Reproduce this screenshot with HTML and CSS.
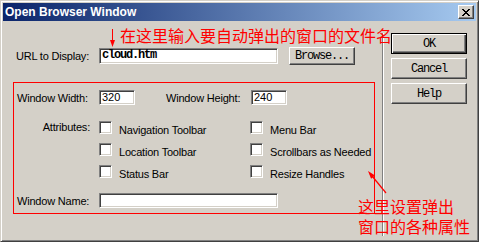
FILE: index.html
```html
<!DOCTYPE html>
<html><head><meta charset="utf-8"><link rel="stylesheet" href="styles.css"></head>
<body>
<div class="window">
  <div class="titlebar">
    <span class="title">Open Browser Window</span>
    <span class="close"><svg width="8" height="7" viewBox="0 0 8 7"><path d="M0 0h2v1H0zM6 0h2v1H6zM1 1h2v1H1zM5 1h2v1H5zM2 2h4v1H2zM3 3h2v1H3zM2 4h4v1H2zM1 5h2v1H1zM5 5h2v1H5zM0 6h2v1H0zM6 6h2v1H6z"/></svg></span>
  </div>
  <div class="body">
    <div class="main">
      <div class="url-row">
        <span class="lbl">URL to Display:</span>
        <span class="field url-field">cloud.htm</span>
        <span class="btn browse">Browse...</span>
      </div>
      <div class="box">
        <div class="size-row">
          <span class="lbl">Window Width:</span>
          <span class="field small">320</span>
          <span class="lbl2">Window Height:</span>
          <span class="field small">240</span>
        </div>
        <div class="attrs">
          <span class="lbl attr-lbl">Attributes:</span>
          <div class="checks">
            <div class="chk"><span class="cb"></span><span class="t">Navigation Toolbar</span></div>
            <div class="chk"><span class="cb"></span><span class="t">Menu Bar</span></div>
            <div class="chk"><span class="cb"></span><span class="t">Location Toolbar</span></div>
            <div class="chk"><span class="cb"></span><span class="t">Scrollbars as Needed</span></div>
            <div class="chk"><span class="cb"></span><span class="t">Status Bar</span></div>
            <div class="chk"><span class="cb"></span><span class="t">Resize Handles</span></div>
          </div>
        </div>
        <div class="name-row">
          <span class="lbl">Window Name:</span>
          <span class="field name-field"></span>
        </div>
      </div>
    </div>
    <div class="side">
      <span class="btn dflt">OK</span>
      <span class="btn">Cancel</span>
      <span class="btn">Help</span>
    </div>
  </div>
  <div class="note note-top">在这里输入要自动弹出的窗口的文件名</div>
  <svg class="arrow-top" width="10" height="22" viewBox="0 0 10 22"><rect x="4" y="1" width="1" height="12" fill="#f00"/><polygon points="2,12 7,12 4.5,19" fill="#f00"/></svg>
  <div class="note note-bottom"><div>这里设置弹出</div><div>窗口的各种属性</div></div>
  <svg class="arrow-bottom" width="26" height="28" viewBox="0 0 26 28"><line x1="22" y1="25" x2="6" y2="5.5" stroke="#f00" stroke-width="1.2"/><polygon points="4,3 7.1,10.8 11,7.6" fill="#f00"/></svg>
</div>
</body></html>
```
FILE: styles.css
```css
* { box-sizing: border-box; }
html, body { margin: 0; padding: 0; }
body {
  width: 479px; height: 242px; overflow: hidden;
  background: #D4D0C8;
  font-family: "Liberation Sans", Arial, sans-serif;
  font-size: 11px; color: #000; letter-spacing: -0.2px;
}
.window {
  position: relative;
  width: 479px; height: 242px;
  background: #D4D0C8;
  border: 1px solid; border-color: #D4D0C8 #404040 #404040 #D4D0C8;
  box-shadow: inset 1px 1px #fff, inset -1px -1px #808080;
  padding: 2px;
  display: flex; flex-direction: column;
}
.titlebar {
  flex: none; height: 18px;
  display: flex; align-items: center;
  padding: 0 2px;
  background: linear-gradient(to right, #0A246A, #A6CAF0);
}
.title {
  flex: 1; color: #fff; font-weight: bold; font-size: 12px; letter-spacing: 0;
  font-family: "Liberation Sans", Arial, sans-serif;
}
.close {
  width: 16px; height: 14px;
  display: flex; align-items: center; justify-content: center;
  background: #D4D0C8;
  border: 1px solid; border-color: #fff #404040 #404040 #fff;
  box-shadow: inset -1px -1px #808080;
}
.close svg { display: block; fill: #000; }
.body { flex: 1; display: flex; }
.main { width: 379px; flex: none; }
.url-row {
  margin-top: 26px; height: 18px; padding-left: 13px;
  display: flex; align-items: center;
}
.lbl { width: 83px; flex: none; white-space: nowrap; }
.field {
  display: block; flex: none; background: #fff;
  border: 1px solid; border-color: #808080 #fff #fff #808080;
  box-shadow: inset 1px 1px #404040, inset -1px -1px #D4D0C8;
  font-family: "Liberation Mono", "Courier New", monospace;
  font-size: 12px; letter-spacing: -1.2px; font-weight: bold;
  padding-left: 2px; line-height: 13px;
}
.url-field { width: 179px; height: 16px; }
.btn {
  display: flex; align-items: center; justify-content: center;
  background: #D4D0C8;
  border: 1px solid; border-color: #fff #404040 #404040 #fff;
  box-shadow: inset -1px -1px #808080;
  font-family: "Liberation Mono", "Courier New", monospace;
  font-size: 12px; letter-spacing: -1.2px;
}
.browse { width: 66px; height: 18px; margin-left: 11px; }
.box {
  margin-left: 10px; margin-top: 17px;
  width: 362px; height: 132px;
  border: 1px solid #f00;
  padding-left: 3px;
}
.size-row { margin-top: 7px; height: 15px; display: flex; align-items: center; }
.size-row .lbl { width: 82px; }
.small { width: 36px; height: 15px; font-weight: normal; font-family: "Liberation Sans", Arial, sans-serif; font-size: 11px; letter-spacing: 0; padding-left: 2px; }
.lbl2 { margin-left: 31px; width: 85px; white-space: nowrap; }
.attrs { margin-top: 16px; display: flex; }
.attr-lbl { width: 82px; text-align: right; padding-right: 9px; line-height: 13px; }
.checks { display: grid; grid-template-columns: 151px auto; row-gap: 9px; }
.chk { display: flex; height: 13px; white-space: nowrap; }
.cb {
  width: 13px; height: 13px; flex: none; background: #fff;
  border: 1px solid; border-color: #808080 #fff #fff #808080;
  box-shadow: inset 1px 1px #404040, inset -1px -1px #D4D0C8;
}
.t { margin-left: 7px; padding-top: 3px; line-height: 13px; }
.name-row { margin-top: 15px; height: 15px; display: flex; align-items: center; }
.name-row .lbl { width: 82px; }
.name-field { width: 179px; height: 15px; }
.side {
  flex: 1; margin-top: 12px; margin-bottom: 3px;
  border-left: 1px solid #808080;
  box-shadow: inset 1px 0 #fff;
  padding-left: 8px;
  display: flex; flex-direction: column; gap: 4px;
}
.side .btn { width: 76px; height: 21px; }
.side .dflt {
  border-color: #000;
  box-shadow: inset 1px 1px #fff, inset -1px -1px #404040, inset -2px -2px #808080;
}
.note {
  position: absolute; color: #f00; letter-spacing: 0;
  font-family: "Noto Sans CJK SC", sans-serif; font-size: 16px;
  white-space: nowrap;
}
.note-top { left: 119px; top: 26px; line-height: 16px; }
.note-bottom { left: 357px; top: 195px; line-height: 20px; }
.arrow-top { position: absolute; left: 107px; top: 27px; }
.arrow-bottom { position: absolute; left: 363px; top: 167px; }
```
